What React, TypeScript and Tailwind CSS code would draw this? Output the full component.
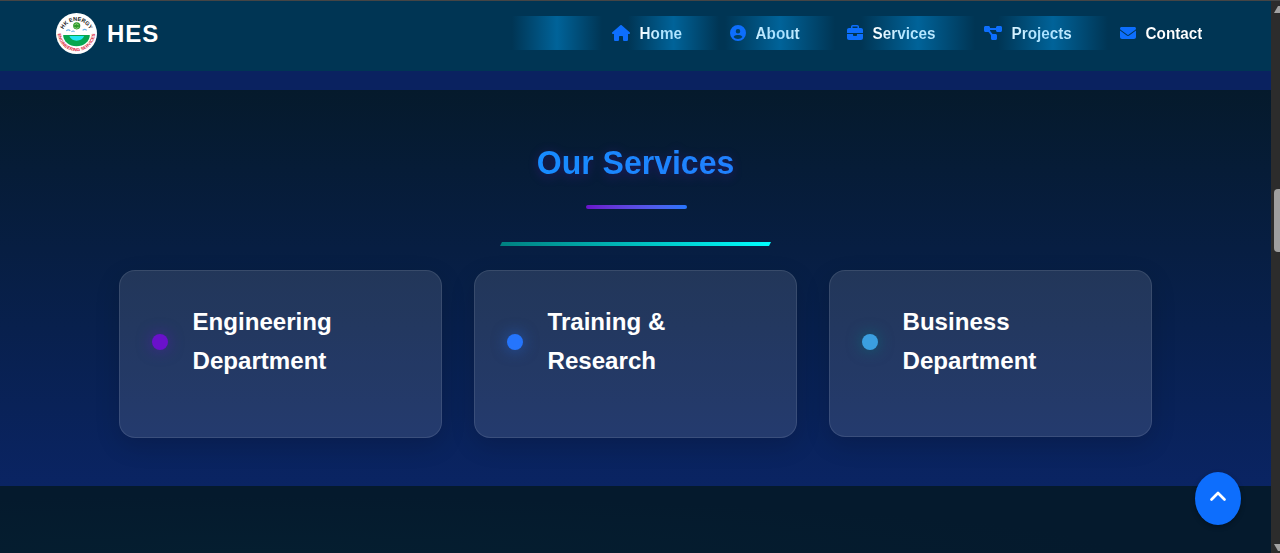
import { FaHouse, FaCircleUser, FaBriefcase, FaDiagramProject, FaEnvelope } from "react-icons/fa6";
import type { IconType } from "react-icons";

function Logo() {
  return (
    <svg viewBox="0 0 40 40" className="h-[41px] w-[41px] shrink-0" aria-label="HES">
      <defs>
        <path id="arcTop" d="M6.100 20 A14 14 0 0 1 33.900 20" />
        <path id="arcBottom" d="M1.800 17 A18.300 18.300 0 1 0 38.200 17" />
      </defs>
      <circle cx="20" cy="20" r="20" fill="#fff" />
      <path d="M7 21.500 H33 A13 11 0 0 1 7 21.500Z" fill="#08a64f" />
      <path d="M13 22.500 H27.500 Q25.500 27 20 27 Q15 27 13 22.500Z" fill="#22e6f2" />
      <path d="M10 17.500 q2 -2 4 0 M15 18.500 q2 -2 3 0 M26 17 q2 -2 4 0" stroke="#6db4e8" strokeWidth="1" fill="none" />
      <circle cx="20.200" cy="12.500" r="3.500" fill="#2d9b2b" />
      <path d="M18 11.500l2-1 2 1 M18 14l2 1 2-1" stroke="#a4d58c" strokeWidth="0.900" fill="none" />
      <text fontSize="5.400" fontWeight="700" fill="#111"><textPath href="#arcTop" startOffset="50%" textAnchor="middle">HK ENERGY</textPath></text>
      <text fontSize="4.400" fontWeight="700" fill="#e02238"><textPath href="#arcBottom" startOffset="50%" textAnchor="middle">ENGINEERING SERVICES</textPath></text>
    </svg>
  );
}

const links: { label: string; Icon: IconType; item: string; glow: string; icon: string; text: string }[] = [
  { label: "Home", Icon: FaHouse, item: "w-[118px]", glow: "left-[16px] w-[91px]", icon: "w-[18px]", text: "from-white via-[#a9e2ff] to-[#b5e7ff]" },
  { label: "About", Icon: FaCircleUser, item: "w-[117px]", glow: "left-[-5px] w-[110px]", icon: "w-4", text: "from-[#c8edff] via-[#a2dfff] to-[#c7ecff]" },
  { label: "Services", Icon: FaBriefcase, item: "w-[137px]", glow: "left-[14px] w-[114px]", icon: "w-4", text: "from-white via-[#b2e5ff] to-[#b8e8ff]" },
  { label: "Projects", Icon: FaDiagramProject, item: "w-[136px]", glow: "left-[14px] w-[110px]", icon: "w-[18px]", text: "from-[#d9f3ff] via-[#a5e0ff] to-[#c7edff]" },
  { label: "Contact", Icon: FaEnvelope, item: "w-[84px]", glow: "hidden", icon: "w-4", text: "from-white to-white" },
];

const services = [
  { lines: ["Engineering", "Department"], size: "h-[168px]", dot: "bg-[#6a11cb] shadow-[0_0_15px_rgba(106,17,203,0.5)]" },
  { lines: ["Training &", "Research"], size: "h-[168px]", dot: "bg-[#2575fc] shadow-[0_0_15px_rgba(37,117,252,0.5)]" },
  { lines: ["Business", "Department"], size: "h-[167px]", dot: "bg-[#3b9fe0] shadow-[0_0_15px_rgba(0,128,128,0.6)]" },
];

function Navbar() {
  return (
    <header className="flex h-[70px] shrink-0 items-start bg-[#003554] pl-[56px]">
      <a className="mt-[12px] flex items-center gap-[10px]" href="#home">
        <Logo />
        <span className="text-[24px] leading-10 font-bold tracking-[1px]">HES</span>
      </a>
      <nav className="mt-[15px] ml-auto flex h-[34px]">
        <span className="mr-[10px] w-[90px] bg-linear-to-r from-transparent via-[#006399] to-transparent" />
        {links.map(({ label, Icon, item, glow, icon, text }) => (
          <a key={label} href="#" className={`relative flex h-[34px] items-center gap-[9.500px] ${item}`}>
            <span className={`absolute inset-y-0 bg-linear-to-r from-transparent via-[#006399] to-transparent ${glow}`} />
            <Icon className={`relative h-4 shrink-0 text-[#0d6efd] ${icon}`} />
            <span className={`relative mt-[2px] scale-y-[1.04] bg-linear-to-r bg-clip-text text-[15.300px] leading-6 font-bold text-transparent ${text}`}>{label}</span>
          </a>
        ))}
      </nav>
      <div className="w-[67px]" />
    </header>
  );
}

function Scrollbar() {
  return (
    <div className="flex w-[9px] shrink-0 flex-col items-end justify-between bg-[#2c2c2c]">
      <svg viewBox="0 0 6 7" className="mt-[5px] h-[7px] w-[6px]"><path d="M0 7 L4 0 H6 V7Z" fill="#a2a2a2" /></svg>
      <div className="mt-[86px] mb-auto h-0" />
      <div className="mb-[292px] h-[63px] w-[6px] shrink-0 rounded-l-[4px] bg-[#9f9f9f]" />
      <svg viewBox="0 0 6 7" className="mb-[2px] h-[7px] w-[6px]"><path d="M0 0 H6 V7 H4Z" fill="#a2a2a2" /></svg>
    </div>
  );
}

export default function App() {
  return (
    <div className="relative flex h-[553px] w-[1280px] flex-col overflow-hidden bg-[#051a2d] font-['Liberation_Sans',Arial,sans-serif] text-white">
      <div className="h-px shrink-0 bg-[#454545]" />
      <div className="flex min-h-0 flex-1">
        <div className="flex w-[1271px] flex-col">
          <Navbar />
          <div className="h-[19px] shrink-0 bg-[#0a2260]" />
          <section className="flex h-[396px] shrink-0 flex-col items-center bg-linear-to-b/srgb from-[#051a2c] to-[#0a2463]">
            <h2 className="mt-[48px] scale-y-[1.06] bg-linear-to-r from-[#168cff] to-[#2080fe] bg-clip-text text-[32px] leading-[48px] font-bold text-transparent drop-shadow-[0_2px_5px_rgba(106,17,203,0.3)]">Our Services</h2>
            <div className="mt-[19px] ml-px h-1 w-[101px] rounded-[2px] bg-linear-to-r from-[#6a11cb] to-[#2575fc]" />
            <div className="mt-[33px] h-1 w-[271px] bg-linear-to-r from-[#008080] to-[#00ffff] [clip-path:polygon(2px_0,100%_0,calc(100%_-_2px)_100%,0_100%)]" />
            <div className="mt-[24px] grid w-[1033px] grid-cols-3 gap-8">
              {services.map(({ lines, size, dot }) => (
                <article key={lines[0]} className={`flex rounded-[16px] border border-white/10 bg-white/11 pl-8 shadow-[0_8px_24px_rgba(0,0,0,0.15)] ${size}`}>
                  <span className={`mt-[63px] h-4 w-4 shrink-0 rounded-full ${dot}`} />
                  <h3 className="mt-[31px] ml-[24.500px] self-start text-[24.100px] leading-[39px] font-bold">{lines.map((line) => <span className="block" key={line}>{line}</span>)}</h3>
                </article>
              ))}
            </div>
          </section>
          <div className="flex-1 bg-[#051a2d] bg-radial-[at_20%_100%] from-[#051e30] to-[#051a2d] to-60%" />
        </div>
        <Scrollbar />
      </div>
      <button className="absolute top-[472px] left-[1195px] flex h-[53px] w-[46px] items-center justify-center rounded-[50%] bg-[#0d6efd] shadow-[0_2px_5px_rgba(0,0,0,0.3)]" aria-label="Scroll to top">
        <svg viewBox="0 0 18 12" className="mb-[5px] h-3 w-[18px]" fill="none" stroke="white" strokeWidth="2.700" strokeLinecap="round" strokeLinejoin="round"><path d="M2.500 9.500 9 3 15.500 9.500" /></svg>
      </button>
    </div>
  );
}
